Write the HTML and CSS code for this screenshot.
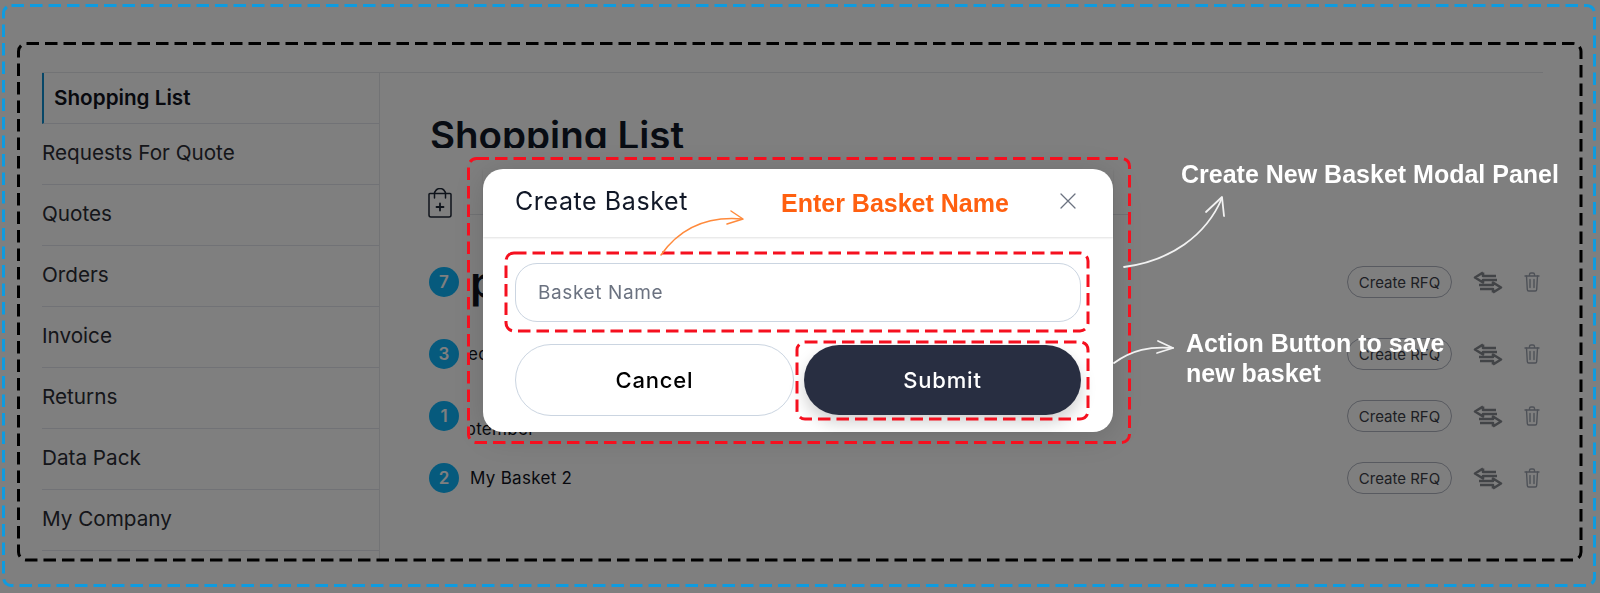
FILE: index.html
```html
<!DOCTYPE html>
<html lang="en">
<head>
  <title>Create Basket</title>
  <link rel="stylesheet" href="styles.css">
</head>
<body>

<div class="page">
  <div class="sidebar">
    <a class="side-link active" href="#">Shopping List</a>
    <a class="side-link" href="#">Requests For Quote</a>
    <a class="side-link" href="#">Quotes</a>
    <a class="side-link" href="#">Orders</a>
    <a class="side-link" href="#">Invoice</a>
    <a class="side-link" href="#">Returns</a>
    <a class="side-link" href="#">Data Pack</a>
    <a class="side-link" href="#">My Company</a>
  </div>

  <div class="main-content">
    <h1 class="page-title">Shopping List</h1>
    <div class="tool-row">
      <svg class="bag-icon" viewBox="0 0 24 30" fill="none" stroke="#1f2937" stroke-width="1.500" stroke-linecap="round" stroke-linejoin="round">
        <path d="M2 5.500h20a1 1 0 0 1 1 1V27a2 2 0 0 1-2 2H3a2 2 0 0 1-2-2V6.500a1 1 0 0 1 1-1z"/>
        <path d="M6.500 10V6a5.500 5.500 0 0 1 11 0v4"/>
        <path d="M12 15.500v7M8.500 19h7" stroke-width="1.800"/>
      </svg>
      <div class="tool-line"></div>
    </div>

    <div class="basket-row first">
      <span class="count">7</span>
      <span class="basket-name big">pre order</span>
      <div class="row-actions">
        <button class="rfq-btn">Create RFQ</button>
        <svg class="swap-icon" viewBox="0 0 30 23" fill="none" stroke="#85888e" stroke-width="2.600" stroke-linejoin="round"><path d="M10 1.500 2 6.500l8 5V9h14M10 1.500V5h13"/><path d="M20 21.500l8-5-8-5V14H6M20 21.500V18H7"/></svg>
        <svg class="trash-icon" viewBox="0 0 16 20" fill="none" stroke="#9ca3af" stroke-width="1.400" stroke-linecap="round" stroke-linejoin="round"><path d="M1 4h14M5.500 4V2.500A1.500 1.500 0 0 1 7 1h2a1.500 1.500 0 0 1 1.500 1.500V4"/><path d="M2.500 4l.8 13.500A1.500 1.500 0 0 0 4.800 19h6.400a1.500 1.500 0 0 0 1.500-1.500L13.500 4"/><path d="M6 7.500v8M10 7.500v8"/></svg>
      </div>
    </div>

    <div class="basket-row">
      <span class="count">3</span>
      <span class="basket-name cut"><span class="cut-one">Recent Basket</span></span>
      <div class="row-actions">
        <button class="rfq-btn">Create RFQ</button>
        <svg class="swap-icon" viewBox="0 0 30 23" fill="none" stroke="#85888e" stroke-width="2.600" stroke-linejoin="round"><path d="M10 1.500 2 6.500l8 5V9h14M10 1.500V5h13"/><path d="M20 21.500l8-5-8-5V14H6M20 21.500V18H7"/></svg>
        <svg class="trash-icon" viewBox="0 0 16 20" fill="none" stroke="#9ca3af" stroke-width="1.400" stroke-linecap="round" stroke-linejoin="round"><path d="M1 4h14M5.500 4V2.500A1.500 1.500 0 0 1 7 1h2a1.500 1.500 0 0 1 1.500 1.500V4"/><path d="M2.500 4l.8 13.500A1.500 1.500 0 0 0 4.800 19h6.400a1.500 1.500 0 0 0 1.500-1.500L13.500 4"/><path d="M6 7.500v8M10 7.500v8"/></svg>
      </div>
    </div>

    <div class="basket-row">
      <span class="count">1</span>
      <span class="basket-name cut low"><span class="cut-two">September</span></span>
      <div class="row-actions">
        <button class="rfq-btn">Create RFQ</button>
        <svg class="swap-icon" viewBox="0 0 30 23" fill="none" stroke="#85888e" stroke-width="2.600" stroke-linejoin="round"><path d="M10 1.500 2 6.500l8 5V9h14M10 1.500V5h13"/><path d="M20 21.500l8-5-8-5V14H6M20 21.500V18H7"/></svg>
        <svg class="trash-icon" viewBox="0 0 16 20" fill="none" stroke="#9ca3af" stroke-width="1.400" stroke-linecap="round" stroke-linejoin="round"><path d="M1 4h14M5.500 4V2.500A1.500 1.500 0 0 1 7 1h2a1.500 1.500 0 0 1 1.500 1.500V4"/><path d="M2.500 4l.8 13.500A1.500 1.500 0 0 0 4.800 19h6.400a1.500 1.500 0 0 0 1.500-1.500L13.500 4"/><path d="M6 7.500v8M10 7.500v8"/></svg>
      </div>
    </div>

    <div class="basket-row">
      <span class="count">2</span>
      <span class="basket-name">My Basket 2</span>
      <div class="row-actions">
        <button class="rfq-btn">Create RFQ</button>
        <svg class="swap-icon" viewBox="0 0 30 23" fill="none" stroke="#85888e" stroke-width="2.600" stroke-linejoin="round"><path d="M10 1.500 2 6.500l8 5V9h14M10 1.500V5h13"/><path d="M20 21.500l8-5-8-5V14H6M20 21.500V18H7"/></svg>
        <svg class="trash-icon" viewBox="0 0 16 20" fill="none" stroke="#9ca3af" stroke-width="1.400" stroke-linecap="round" stroke-linejoin="round"><path d="M1 4h14M5.500 4V2.500A1.500 1.500 0 0 1 7 1h2a1.500 1.500 0 0 1 1.500 1.500V4"/><path d="M2.500 4l.8 13.500A1.500 1.500 0 0 0 4.800 19h6.400a1.500 1.500 0 0 0 1.500-1.500L13.500 4"/><path d="M6 7.500v8M10 7.500v8"/></svg>
      </div>
    </div>
  </div>
</div>

<div class="overlay"></div>

<div class="modal">
  <div class="modal-header">
    <h2>Create Basket</h2>
    <svg class="close-icon" viewBox="0 0 16 16" fill="none" stroke="#6b7280" stroke-width="1.300" stroke-linecap="round"><path d="M1 1l14 14M15 1 1 15"/></svg>
  </div>
  <div class="modal-body">
    <div class="field">Basket Name</div>
    <div class="modal-buttons">
      <button class="cancel-btn">Cancel</button>
      <button class="submit-btn">Submit</button>
    </div>
  </div>
</div>

<!-- annotation boxes and arrows -->
<svg class="marks" viewBox="0 0 1600 593" fill="none" stroke-linecap="butt" stroke-linejoin="round">
  <g stroke-width="3" stroke-dasharray="12.500 6">
    <rect x="3.500" y="5.500" width="1591" height="580" rx="8" stroke="#0f9bdf"/>
    <rect x="18.500" y="43.500" width="1562.500" height="516.500" rx="8" stroke="#000"/>
    <g stroke="#f5101f">
      <rect x="468.500" y="158.500" width="661" height="284" rx="8"/>
      <rect x="506" y="253" width="582" height="78" rx="8"/>
      <rect x="797" y="342" width="291" height="77" rx="8"/>
    </g>
  </g>
  <g stroke="#ff8a3c" stroke-width="1.500" stroke-linecap="round">
    <path d="M661 255C680 228 706 216 742 219"/>
    <path d="M731 211 743 219 727 224"/>
  </g>
  <g stroke="#f2f2f2" stroke-width="1.800" stroke-linecap="round">
    <path d="M1124 267C1170 261 1206 236 1222 198"/>
    <path d="M1206 212 1222 197 1224 216"/>
    <path d="M1114 363C1132 350 1150 346 1173 348"/>
    <path d="M1158 341 1173 348 1157 353"/>
  </g>
</svg>

<div class="note note-orange">Enter Basket Name</div>
<div class="note note-title">Create New Basket Modal Panel</div>
<div class="note note-action">Action Button to save<br>new basket</div>

</body>
</html>
```

FILE: styles.css
```css
* {
  margin: 0;
  padding: 0;
  box-sizing: border-box;
}
html, body {
  height: 100%;
  overflow: hidden;
}
body {
  background-color: #fff;
  font-family: Inter, "Open Sans", sans-serif;
  color: #10131c;
}
.page {
  display: flex;
  height: 560px;
  padding: 72px 57px 0 42px;
}
.sidebar {
  width: 338px;
  flex-shrink: 0;
  border-top: 1px solid #e5e7eb;
  border-right: 1px solid #e5e7eb;
  display: flex;
  flex-direction: column;
}
.side-link {
  height: 61px;
  display: flex;
  align-items: center;
  padding-bottom: 3px;
  font-size: 20.700px;
  color: #2b2d35;
  text-decoration: none;
  border-bottom: 1px solid #e2e4ec;
}
.side-link.active {
  height: 51px;
  padding: 0 0 2px 10px;
  font-weight: 600;
  color: #10131c;
  border-left: 2px solid #0f8fd0;
}
.main-content {
  flex: 1;
  padding: 40px 3px 0 51px;
  border-top: 1px solid #e5e7eb;
}
.page-title {
  height: 35px;
  margin-left: -1px;
  overflow: hidden;
  font-size: 38.500px;
  line-height: 44px;
  font-weight: 600;
  color: #111827;
}
.tool-row {
  height: 70px;
  margin-bottom: 33px;
  display: flex;
  align-items: flex-end;
}
.bag-icon {
  width: 24px;
  height: 30px;
  margin-left: -3px;
  flex-shrink: 0;
}
.tool-line {
  width: 663px;
  height: 1px;
  margin: 0 0 3px 15px;
  background-color: #e5e7eb;
}
.basket-row {
  height: 62px;
  display: flex;
  align-items: center;
  gap: 11px;
}
.basket-row.first {
  margin-bottom: 10px;
}
.count {
  width: 30px;
  height: 30px;
  margin-left: -2px;
  border-radius: 50%;
  background-color: #0cb4fa;
  color: #fff;
  font-size: 17px;
  font-weight: 600;
  display: flex;
  align-items: center;
  justify-content: center;
  flex-shrink: 0;
}
.basket-name {
  font-size: 17px;
  letter-spacing: 0.3px;
  flex: 1;
}
.basket-name.big {
  font-size: 44px;
  line-height: 1;
  font-weight: 600;
  letter-spacing: 0;
}
.basket-name.cut {
  overflow: hidden;
  white-space: nowrap;
}
.basket-name.low {
  line-height: 24px;
  padding-top: 26px;
}
.cut-one {
  display: block;
  margin-left: -13px;
}
.cut-two {
  display: block;
  margin-left: -26px;
}
.row-actions {
  display: flex;
  align-items: center;
}
.rfq-btn {
  width: 105px;
  height: 32px;
  border: 1px solid #b0b4c0;
  border-radius: 16px;
  background: transparent;
  font-family: Inter, sans-serif;
  font-size: 15px;
  color: #3c3f48;
}
.swap-icon {
  width: 30px;
  height: 23px;
  margin-left: 21px;
}
.trash-icon {
  width: 16px;
  height: 20px;
  margin-left: 21px;
}
.overlay {
  position: fixed;
  inset: 0;
  background: rgba(0, 0, 0, 0.5);
}
.modal {
  position: absolute;
  left: 483px;
  top: 169px;
  width: 630px;
  height: 263px;
  background-color: #fff;
  border-radius: 20px;
  box-shadow: 0 4px 30px rgba(0, 0, 0, 0.15);
}
.modal-header {
  height: 68px;
  padding: 0 48px 4px 32px;
  display: flex;
  justify-content: space-between;
  align-items: center;
  box-shadow: 0 1px 2px rgba(0, 0, 0, 0.12);
}
.modal-header h2 {
  font-size: 25px;
  font-weight: 400;
  letter-spacing: 0.600px;
  color: #111827;
}
.close-icon {
  width: 16px;
  height: 16px;
  margin-right: -11px;
}
.modal-body {
  padding: 26px 32px 0;
}
.field {
  height: 59px;
  border: 1px solid #cbd5e1;
  border-radius: 22px;
  padding-left: 22px;
  display: flex;
  align-items: center;
  font-size: 19px;
  letter-spacing: 0.600px;
  color: #6b7280;
}
.modal-buttons {
  display: flex;
  gap: 10px;
  margin-top: 22px;
  align-items: center;
}
.cancel-btn, .submit-btn {
  flex: 1;
  border-radius: 36px;
  font-family: Inter, sans-serif;
  font-size: 22px;
  letter-spacing: 0.800px;
  font-weight: 500;
}
.cancel-btn {
  height: 72px;
  background-color: #fff;
  border: 1px solid #cbd5e1;
  color: #000;
}
.submit-btn {
  height: 70px;
  background-color: #282e41;
  border: none;
  color: #fff;
  box-shadow: 0 8px 16px rgba(0, 0, 0, 0.18);
}
.marks {
  position: absolute;
  left: 0;
  top: 0;
  width: 1600px;
  height: 593px;
}
.note {
  position: absolute;
  font-family: "Liberation Sans", Arial, sans-serif;
  font-weight: 700;
  font-size: 25px;
  line-height: 30px;
  color: #fff;
}
.note-orange {
  left: 781px;
  top: 188px;
  color: #ff6010;
}
.note-title {
  left: 1181px;
  top: 159px;
}
.note-action {
  left: 1186px;
  top: 328px;
}
```
